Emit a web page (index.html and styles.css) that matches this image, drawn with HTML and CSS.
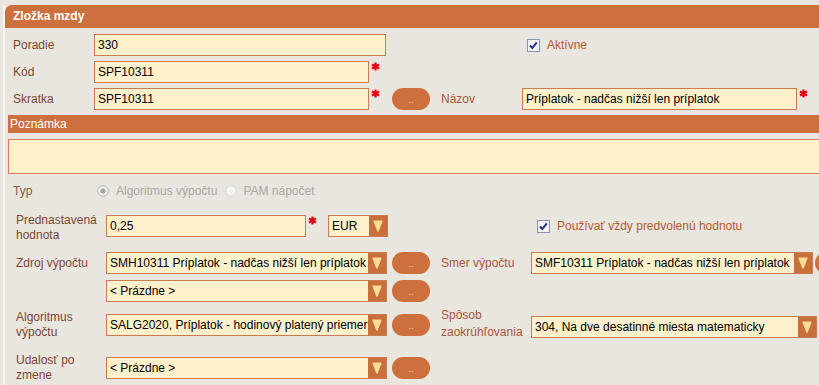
FILE: index.html
```html
<!DOCTYPE html>
<html lang="sk">
<head>
<meta charset="utf-8">
<title>Zložka mzdy</title>
<link rel="stylesheet" href="styles.css">
</head>
<body>
<div class="page">
  <div class="panel">
    <div class="hdr">Zložka mzdy</div>

    <div class="grid1">
      <span class="lbl">Poradie</span>
      <div class="field"><div class="inp w292">330</div></div>
      <span></span><span></span>
      <div class="field2"><label class="chk m5"><svg class="cb" width="13" height="13" viewBox="0 0 13 13"><rect x="0.5" y="0.5" width="12" height="12" fill="#f4f4f4" stroke="#8696b0"/><path d="M3 6.5 L5.3 9 L9.8 3.3" fill="none" stroke="#26318f" stroke-width="2"/></svg><span class="ctext">Aktívne</span></label></div>

      <span class="lbl">Kód</span>
      <div class="field"><div class="inp w275">SPF10311</div><svg class="req" width="9" height="9" viewBox="0 0 9 9"><path d="M4.5 0.5V8.5M1 2.5L8 6.5M8 2.5L1 6.5" stroke="#e3000b" stroke-width="2.2"/></svg></div>
      <span></span><span></span><span></span>

      <span class="lbl">Skratka</span>
      <div class="field"><div class="inp w275">SPF10311</div><svg class="req" width="9" height="9" viewBox="0 0 9 9"><path d="M4.5 0.5V8.5M1 2.5L8 6.5M8 2.5L1 6.5" stroke="#e3000b" stroke-width="2.2"/></svg></div>
      <div class="bcell"><span class="btn">..</span></div>
      <span class="lbl2">Názov</span>
      <div class="field"><div class="inp w275">Príplatok - nadčas nižší len príplatok</div><svg class="req" width="9" height="9" viewBox="0 0 9 9"><path d="M4.5 0.5V8.5M1 2.5L8 6.5M8 2.5L1 6.5" stroke="#e3000b" stroke-width="2.2"/></svg></div>
    </div>

    <div class="sub">Poznámka</div>
    <div class="note"></div>

    <div class="typ">
      <span class="lbl tlbl">Typ</span>
      <svg class="radio" width="12" height="12" viewBox="0 0 12 12"><circle cx="6" cy="6" r="5.3" fill="#f1f1ef" stroke="#b4b4b0"/><circle cx="6" cy="6" r="2.6" fill="#a4a4a2"/></svg>
      <span class="rtext">Algoritmus výpočtu</span>
      <svg class="radio r2" width="12" height="12" viewBox="0 0 12 12"><circle cx="6" cy="6" r="5.3" fill="#f3f3f1" stroke="#dddcd8"/></svg>
      <span class="rtext r2t">PAM nápočet</span>
    </div>

    <div class="row2 rp">
      <span class="lbl l2 low">Prednastavená hodnota</span>
      <div class="f2">
        <div class="inp w200">0,25</div>
        <svg class="req" width="9" height="9" viewBox="0 0 9 9"><path d="M4.5 0.5V8.5M1 2.5L8 6.5M8 2.5L1 6.5" stroke="#e3000b" stroke-width="2.2"/></svg>
        <div class="sel w60 eur"><span class="stext">EUR</span><span class="arr"><svg width="10" height="12" viewBox="0 0 10 12"><path d="M1.2 1.2H8.8L5 11Z" fill="#fddc93" stroke="#fddc93" stroke-width="1.6" stroke-linejoin="round"/></svg></span></div>
      </div>
      <span class="bcol"></span>
      <span class="lcol"></span>
      <label class="chk m6"><svg class="cb" width="13" height="13" viewBox="0 0 13 13"><rect x="0.5" y="0.5" width="12" height="12" fill="#f4f4f4" stroke="#8696b0"/><path d="M3 6.5 L5.3 9 L9.8 3.3" fill="none" stroke="#26318f" stroke-width="2"/></svg><span class="ctext">Používať vždy predvolenú hodnotu</span></label>
    </div>

    <div class="row2 rz">
      <span class="lbl l2">Zdroj výpočtu</span>
      <div class="f2"><div class="sel w281"><span class="stext">SMH10311 Príplatok - nadčas nižší len príplatok</span><span class="arr"><svg width="10" height="12" viewBox="0 0 10 12"><path d="M1.2 1.2H8.8L5 11Z" fill="#fddc93" stroke="#fddc93" stroke-width="1.6" stroke-linejoin="round"/></svg></span></div></div>
      <div class="bcol"><span class="btn">..</span></div>
      <span class="lcol lbl2">Smer výpočtu</span>
      <div class="f3"><div class="sel w282"><span class="stext">SMF10311 Príplatok - nadčas nižší len príplatok</span><span class="arr"><svg width="10" height="12" viewBox="0 0 10 12"><path d="M1.2 1.2H8.8L5 11Z" fill="#fddc93" stroke="#fddc93" stroke-width="1.6" stroke-linejoin="round"/></svg></span></div><span class="btn edge"></span></div>
    </div>

    <div class="row2 re">
      <span class="lbl l2"></span>
      <div class="f2"><div class="sel w281"><span class="stext">&lt; Prázdne &gt;</span><span class="arr"><svg width="10" height="12" viewBox="0 0 10 12"><path d="M1.2 1.2H8.8L5 11Z" fill="#fddc93" stroke="#fddc93" stroke-width="1.6" stroke-linejoin="round"/></svg></span></div></div>
      <div class="bcol"><span class="btn">..</span></div>
    </div>

    <div class="row2 ra">
      <span class="lbl l2">Algoritmus výpočtu</span>
      <div class="f2"><div class="sel w281"><span class="stext">SALG2020, Príplatok - hodinový platený priemer</span><span class="arr"><svg width="10" height="12" viewBox="0 0 10 12"><path d="M1.2 1.2H8.8L5 11Z" fill="#fddc93" stroke="#fddc93" stroke-width="1.6" stroke-linejoin="round"/></svg></span></div></div>
      <div class="bcol"><span class="btn">..</span></div>
      <span class="lcol lbl2 sp">Spôsob zaokrúhľovania</span>
      <div class="f3 down"><div class="sel w286"><span class="stext">304, Na dve desatinné miesta matematicky</span><span class="arr"><svg width="10" height="12" viewBox="0 0 10 12"><path d="M1.2 1.2H8.8L5 11Z" fill="#fddc93" stroke="#fddc93" stroke-width="1.6" stroke-linejoin="round"/></svg></span></div><span class="btn edge2"></span></div>
    </div>

    <div class="row2 ru">
      <span class="lbl l2">Udalosť po zmene</span>
      <div class="f2"><div class="sel w281"><span class="stext">&lt; Prázdne &gt;</span><span class="arr"><svg width="10" height="12" viewBox="0 0 10 12"><path d="M1.2 1.2H8.8L5 11Z" fill="#fddc93" stroke="#fddc93" stroke-width="1.6" stroke-linejoin="round"/></svg></span></div></div>
      <div class="bcol"><span class="btn">..</span></div>
    </div>
  </div>
</div>
</body>
</html>
```

FILE: styles.css
```css
* { box-sizing: border-box; }

html, body {
  margin: 0;
  width: 819px;
  height: 385px;
  overflow: hidden;
  background: #e8e6df;
  font-family: "Liberation Sans", Arial, sans-serif;
  font-size: 12px;
  color: #000;
}

.page { padding: 5px 0 0 3px; }

.panel {
  border-left: 2px solid #f7f6f2;
  min-height: 380px;
  width: 900px;
}

.hdr {
  height: 23px;
  line-height: 23px;
  background: #cd703d;
  color: #fff;
  font-weight: bold;
  padding-left: 8px;
  border-top-left-radius: 7px;
}

.grid1 {
  display: grid;
  grid-template-columns: 89px 298px 49px 81px 1fr;
  grid-auto-rows: 22px;
  row-gap: 5px;
  padding-top: 6px;
  align-items: center;
}

.lbl { padding-left: 8px; color: #7e4631; }
.lbl2 { color: #a8573a; }

.field { display: flex; align-items: flex-start; height: 22px; }
.field2 { display: flex; align-items: center; }

.inp {
  height: 22px;
  border: 1px solid #c97b51;
  background: #fdf0cb;
  padding-left: 3px;
  line-height: 20px;
  white-space: nowrap;
  overflow: hidden;
}
.w292 { width: 292px; }
.w275 { width: 275px; }
.w200 { width: 200px; }

.req { flex: none; margin-left: 2px; margin-top: 1px; }

.bcell { display: flex; align-items: center; }

.btn {
  flex: none;
  display: flex;
  justify-content: center;
  align-items: flex-end;
  width: 38px;
  height: 22px;
  border-radius: 11px;
  background: #cd703d;
  color: #f6cfae;
  font-size: 9px;
  line-height: 9px;
  padding-bottom: 5px;
}

.chk { display: flex; align-items: center; }
.m5 { margin-left: 5px; }
.m6 { margin-left: 6px; }
.cb { flex: none; }
.ctext { margin-left: 7px; color: #b45a33; }

.sub {
  margin: 5px 0 0 3px;
  height: 18px;
  line-height: 18px;
  background: #cd703d;
  color: #fff;
  padding-left: 2px;
}

.note {
  margin: 6px 0 0 3px;
  height: 35px;
  background: #fdf0cb;
  border: 1px solid #dc7a5f;
  border-right: none;
}

.typ {
  display: flex;
  align-items: center;
  height: 16px;
  margin-top: 9px;
}
.tlbl { width: 89px; flex: none; color: #8a5a45; }
.radio { flex: none; margin-left: 3px; }
.rtext { margin-left: 7px; color: #a9a8a4; }
.r2 { margin-left: 8px; }
.r2t { margin-left: 6px; }

.row2 { display: flex; align-items: center; }
.l2 { width: 101px; flex: none; padding-left: 11px; line-height: 15px; }
.low { margin-top: 4px; }
.f2 { width: 286px; flex: none; display: flex; align-items: flex-start; }
.bcol { width: 49px; flex: none; display: flex; align-items: center; }
.lcol { width: 90px; flex: none; line-height: 17px; }
.sp { margin-top: -2px; }
.f3 { display: flex; align-items: center; flex: none; }
.down { margin-top: 3px; }

.rp { margin-top: 12px; height: 30px; }
.rz { margin-top: 10px; height: 24px; }
.re { margin-top: 4px; height: 24px; }
.ra { margin-top: 6px; height: 32px; }
.ru { margin-top: 11px; height: 32px; }

.sel {
  display: flex;
  height: 22px;
  border: 1px solid #c97b51;
  background: #fdf0cb;
}
.stext {
  flex: 1;
  padding-left: 3px;
  line-height: 20px;
  white-space: nowrap;
  overflow: hidden;
}
.arr {
  flex: none;
  width: 18px;
  background: #c96f3c;
  display: flex;
  align-items: center;
  justify-content: center;
}
.w281 { width: 281px; }
.w282 { width: 282px; }
.w286 { width: 286px; }
.w60 { width: 60px; }
.eur { margin-left: 11px; }

.edge { margin-left: 2px; }
.edge2 { margin-left: 2px; }
```
